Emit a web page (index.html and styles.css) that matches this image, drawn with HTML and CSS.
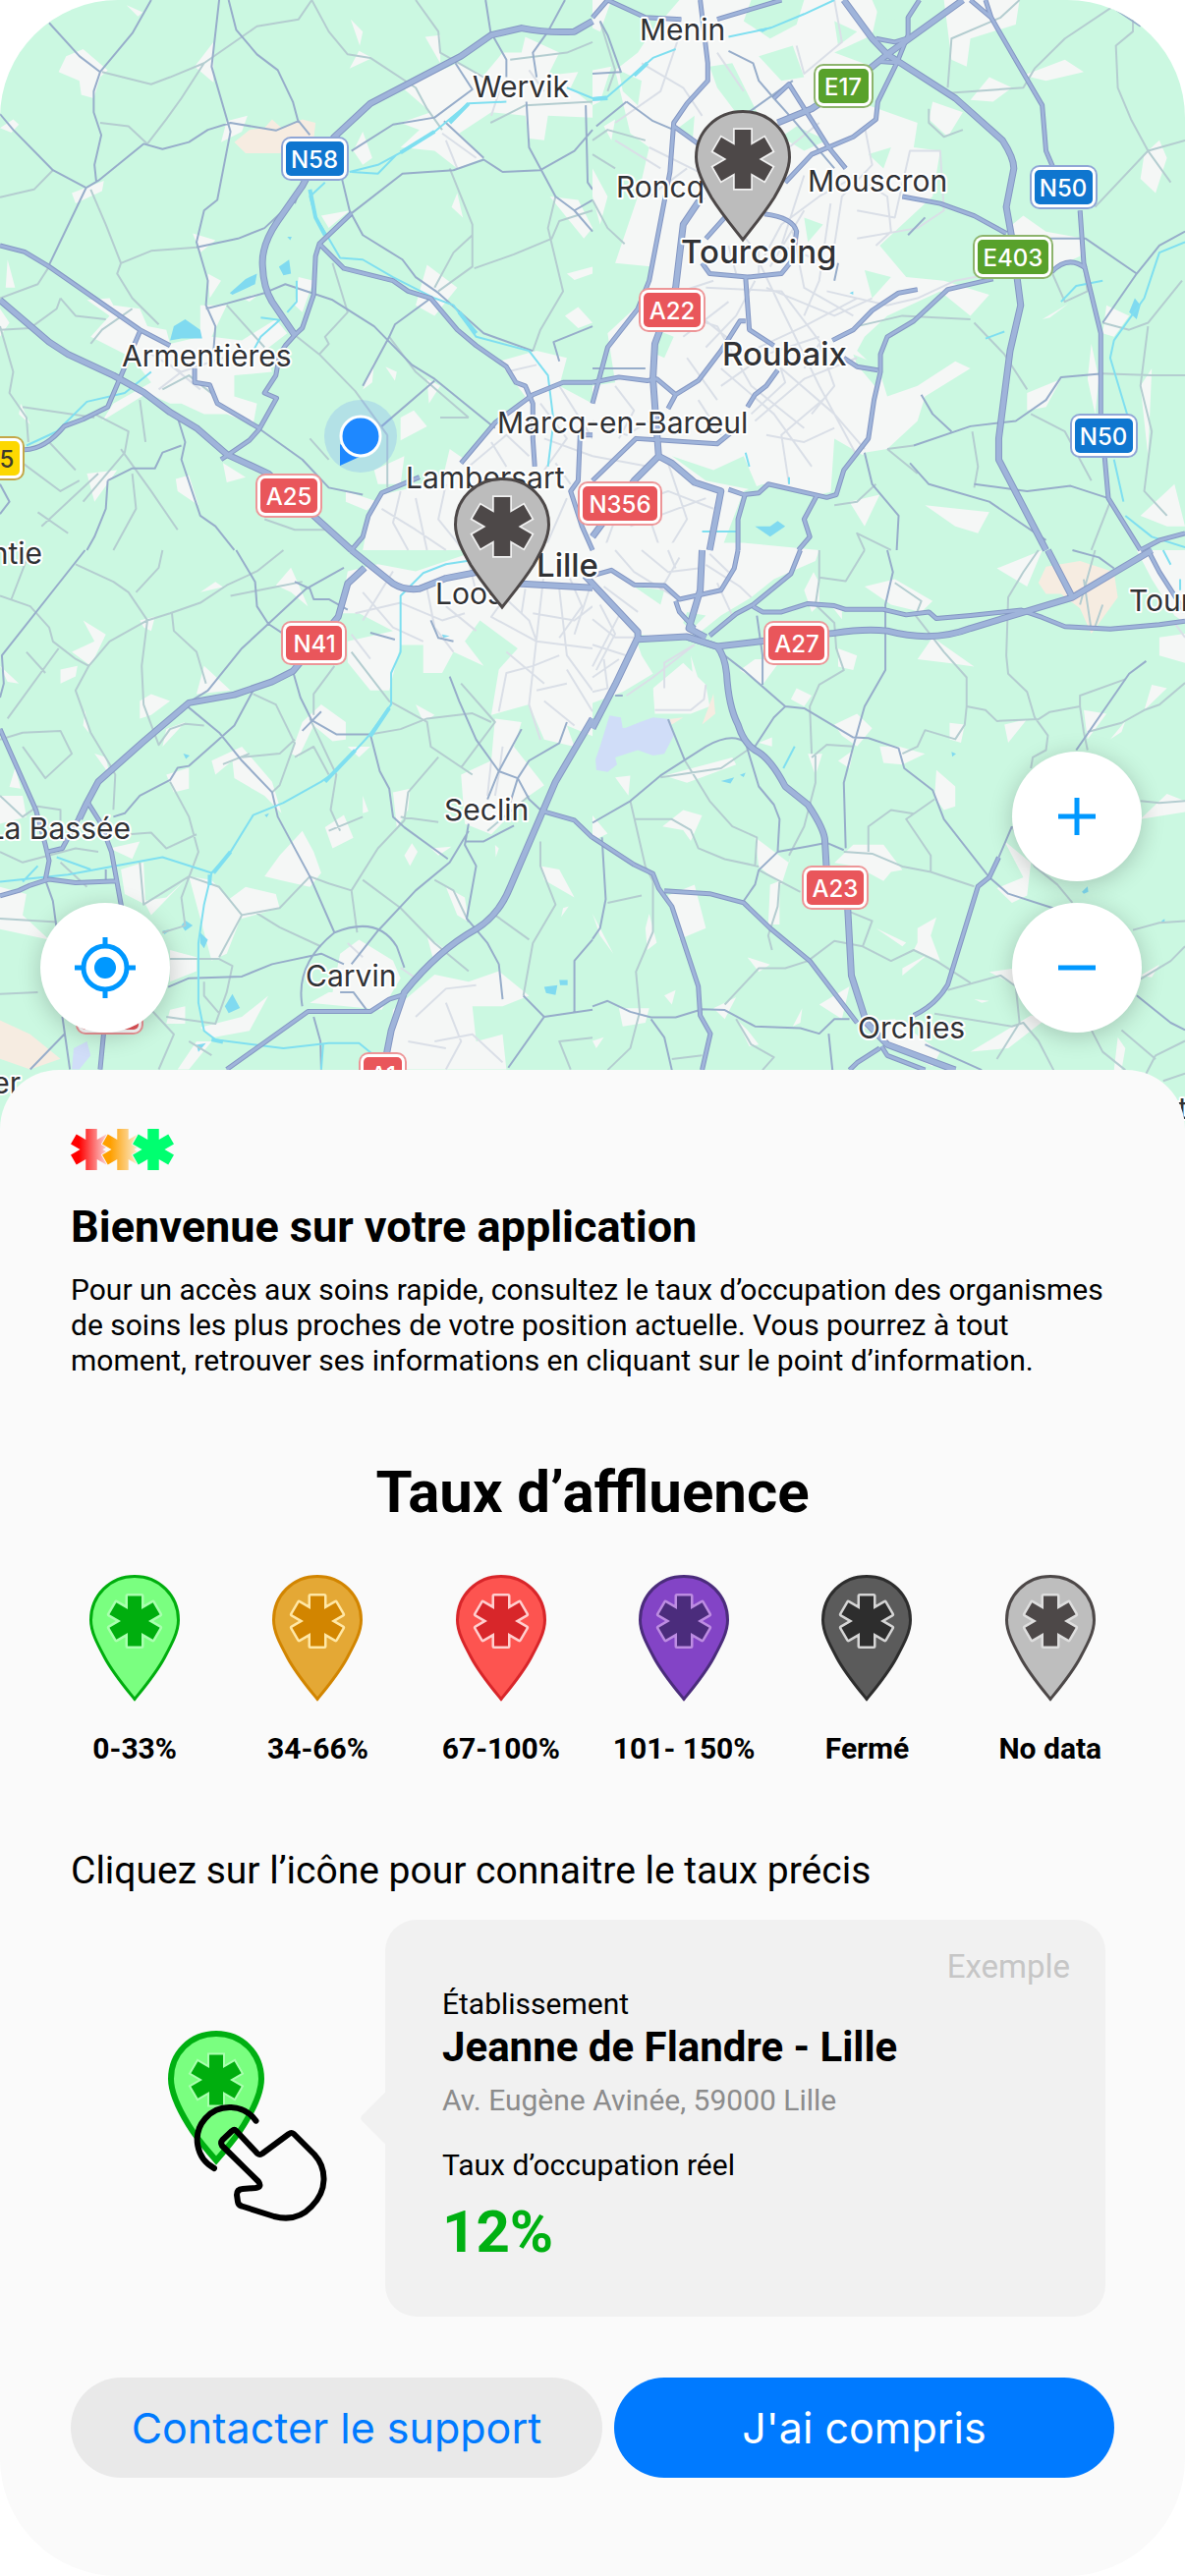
FILE: index.html
```html
<!DOCTYPE html>
<html lang="fr">
<head>
<meta charset="utf-8">
<meta name="viewport" content="width=device-width, initial-scale=1">
<title>Taux d’affluence</title>
<link rel="stylesheet" href="styles.css">
</head>
<body>
<svg class="defs" aria-hidden="true">
  <defs>
    <polygon id="star" points="-7,-25.500 7,-25.500 7,-12.100 18.600,-18.800 25.600,-6.700 14,0 25.600,6.700 18.600,18.800 7,12.100 7,25.500 -7,25.500 -7,12.100 -18.600,18.800 -25.600,6.700 -14,0 -25.600,-6.700 -18.600,-18.800 -7,-12.100"/>
    <symbol id="pin" viewBox="0 0 92 129">
      <path class="pin-body" d="M46 1.500C21 1.500 1.500 21 1.500 46C1.500 58 8 70 15.500 84C24 100 35 113 46 126.500C57 113 68 100 76.500 84C84 70 90.500 58 90.500 46C90.500 21 71 1.500 46 1.500Z"/>
      <use class="pin-star" href="#star" x="46" y="47"/>
    </symbol>
  </defs>
</svg>
<main class="app">
  <section class="map-area" aria-label="Carte">
    <svg class="map" viewBox="0 0 1206 1149" role="img" aria-label="Carte de la métropole lilloise">
      <defs>
        <g id="motorways">
          <g transform="scale(.3846 .3571)">
            <path d="M1568 60L1520 90Q1450 95 1380 80L1300 100L1220 160L980 295L885 390L840 450L800 530L735 630Q690 700 695 760Q697 820 720 860L780 955"/>
            <path d="M0 855L130 975L180 1010L300 1070L380 1118L450 1175L520 1220L600 1295L710 1350L840 1480L930 1568"/>
          </g>
          <g transform="translate(603) scale(.3846 .3571)">
            <path d="M665 0L740 110L780 155L960 280L1085 400Q1115 450 1115 480L1095 590L1110 680L1133 870L1105 1000L1075 1250V1310L1200 1568"/>
            <path d="M980 0L780 155L700 225L580 310L490 350"/>
            <path d="M290 560L240 640L220 820L165 980L160 1080L175 1300L110 1370L0 1530"/>
            <path d="M175 1300L210 1320L270 1375L340 1400L310 1568"/>
          </g>
          <g transform="translate(0 560) scale(.3846 .3571)">
            <path d="M1568 480L1470 660L1430 760L1350 960Q1320 1040 1260 1080Q1160 1140 1070 1260L1035 1370L1015 1480"/>
            <path d="M930 0L1040 95Q1070 115 1110 110L1180 80L1300 55M1370 95L1568 107"/>
            <path d="M965 50L920 95L895 190L775 345L720 375L620 412L500 435L380 545L260 660L230 720L210 765"/>
          </g>
          <g transform="translate(603 560) scale(.3846 .37)">
            <path d="M-20 70L120 225V240L60 370L0 490M120 245L250 238L330 265L450 250L640 228Q720 215 780 222Q900 255 1000 215L1270 130L1480 0M1270 130L1205 0"/>
            <path d="M250 238L330 265Q350 290 355 340Q360 430 385 480Q400 530 430 550Q470 570 510 650L570 700Q615 770 615 800L620 890L675 980L685 1170L725 1300L780 1360L960 1430"/>
            <path d="M290 0L285 110L255 215L300 240"/>
          </g>
        </g>
        <g id="trunks">
          <g transform="scale(.3846 .3571)">
            <path d="M0 700L65 718L130 760L370 940L450 985M780 955L755 985L740 1010L730 1070L700 1120L732 1135L685 1225L660 1255L585 1310M780 955L800 935L830 840L835 730L845 695L930 608"/>
            <path d="M845 695L910 765L1040 800L1080 830L1140 850L1210 940L1260 985L1340 1045L1365 1090L1390 1100L1410 1150V1250L1415 1330M65 1282Q120 1280 170 1215L220 1195L285 1160L370 945M515 1050V1090L555 1097L575 1150L685 1220"/>
            <path d="M1568 1090H1490L1410 1125L1310 1205L1220 1320M930 1568L960 1530L975 1470L1010 1405L1110 1360M1568 1240H1535L1530 1370L1510 1400L1540 1500L1568 1568"/>
          </g>
          <g transform="translate(603) scale(.3846 .3571)">
            <path d="M0 50L40 0L140 50L235 55M285 0L305 180V230L250 295L215 350L205 490L150 800L120 880L40 990L0 1150M865 0L835 50V100L805 180L755 290L750 340L690 390L580 440L510 520M500 0L330 55"/>
            <path d="M480 280L520 240L625 420L670 480M820 560L920 580L1010 615L1095 665M1040 0L1055 50L1130 190L1190 300L1200 430L1220 480M1290 600L1300 750L1345 950V1180L1365 1420L1450 1568M1000 0L1055 50M750 110L800 120L830 110M760 175L820 180"/>
            <path d="M215 360L280 410M455 610Q530 620 540 660L530 740L500 780L410 790L310 780L290 750M350 620L300 680M405 790L415 940L480 985M405 915H390L340 1000L280 1085L220 1125L200 1165M0 1090L70 1075L145 1085L170 1080L220 1125"/>
            <path d="M1060 795L940 825L850 915L780 960L762 1010V1060L745 1140L730 1250L665 1340L645 1410L620 1418L465 1380L440 1405L400 1410L360 1395M860 825L810 835L740 885L690 940L635 970M755 1055L700 1045L665 1020M490 1055L460 1100L430 1125L410 1160"/>
            <path d="M0 1370L115 1250L330 1265L370 1230M405 1405L385 1480V1568M595 1410L560 1480L575 1530L545 1568M1215 775Q1260 725 1305 765M1568 1520L1500 1540L1450 1568"/>
          </g>
          <g transform="translate(0 560) scale(.3846 .3571)">
            <path d="M0 510L95 740L120 840L130 885L120 940M230 715L265 775L295 860L322 1020M0 985L50 970L80 955L130 938L200 948L310 943M125 860L165 850L210 760M275 1370L265 1480M600 1480L815 1315H980L1030 1280L1075 1265M1440 745L1520 770L1568 820"/>
          </g>
          <g transform="translate(603 560) scale(.3846 .37)">
            <path d="M0 70L50 55L110 95L190 97L230 135L340 110L375 50L385 0M550 0L525 65L425 150L380 175L310 235M220 140L230 170L270 215M425 155L450 170H500L570 147L640 153L670 163H770L830 178L890 170L910 188L1000 180L1135 165L1190 185L1250 210L1370 217L1500 205L1568 195"/>
            <path d="M0 790L110 865L160 890L175 930L210 980L280 1200L285 1280L312 1330L290 1430M190 937L310 945L400 970L470 1040L575 1130L700 1300M680 1430L700 1410L760 1370M1075 845L1050 900L1020 925L940 1195Q910 1250 850 1280M1470 0L1500 60L1568 170M765 1365L780 1390L880 1430"/>
          </g>
        </g>
      </defs>
      <rect class="land" width="1206" height="1149"/>

      <g transform="scale(.3846 .3571)">
        <path class="urban" d="M155 205L175 160L220 140L285 200L265 220L248 280L215 270L210 230ZM515 190L565 120V235ZM928 55L960 90L952 130ZM950 145L985 165L925 195ZM1125 105L1165 100V180ZM335 15L378 35L365 47ZM0 365L35 340L50 355L30 378ZM600 345L655 330L640 375L585 405ZM190 550L275 515L270 545L200 580Z
          M1065 250L1210 180L1280 215L1330 150L1380 150L1390 105L1480 150L1450 215L1530 205L1510 250L1568 300V335L1450 330L1440 400L1400 395L1390 330L1300 320L1215 380L1280 450L1210 480L1150 430L1060 420L1110 370L1060 350L1140 320ZM960 375L985 450L960 470L935 430ZM1210 550L1225 620L1195 590ZM510 665L570 685L530 720ZM850 615L925 600L870 650ZM1130 755L1210 820L1150 900L1100 870ZM790 790L830 800L800 890L780 870ZM550 780L585 800L555 850ZM640 850L690 835L660 860Z
          M230 855L290 850L300 870L370 880L390 930L440 940L450 980L530 960L530 870L600 870L560 960L640 970L730 910L760 950L700 1000L720 1060L620 1070V1130L680 1150L670 1210L600 1180L540 1180L480 1150L450 1150L390 1120L270 1200L300 1150L400 1090L350 1020L240 960L290 900ZM20 740L40 820L15 820ZM1495 900L1530 875L1568 920L1530 935ZM1455 560L1530 570L1568 650L1545 680L1500 620Z
          M1320 1030L1420 1000L1500 1020L1480 1100L1568 1150V1568H960L975 1480L1010 1410L1170 1370L1190 1280L1230 1310L1320 1200L1390 1130ZM915 1400L1000 1430L970 1455L915 1430ZM1130 1080L1165 1100L1135 1150ZM1060 1190L1095 1170L1130 1215L1060 1255ZM990 1340L1070 1300L1060 1380L1000 1380ZM230 1350L310 1340L250 1430ZM465 1365L500 1355L525 1440L470 1400ZM590 1320L650 1360L600 1375ZM1500 780L1568 760V780L1520 798ZM990 1030L985 1090L960 1110ZM1020 1045L1050 1060L1045 1085ZM55 1150L80 1210L50 1180ZM0 880L25 920L0 960Z"/>
        <path class="peach" d="M620 405L660 370L700 365L720 340L745 365L800 340L835 350L830 400L740 437H650Z"/>
        <path class="water" d="M450 970L460 930L490 910L530 940L535 965L480 965ZM608 835L650 795L680 780L675 810L615 840ZM738 760L765 740L770 780L750 785ZM760 675L772 675L768 685Z"/>
        <path class="street" d="M1100 1420L1130 1568M1010 1450L1100 1510L1180 1568M1060 1400L1040 1490L1080 1568M1430 1150L1500 1250L1440 1340M1480 1100L1568 1250M1440 1250L1568 1300M1240 1330L1340 1240L1400 1300M1500 1420L1440 1568M1180 1380L1160 1480L1220 1560M1300 1260L1340 1330M1470 1320L1510 1380M400 1010L480 1060L590 1020M420 1110L480 1060M450 1040L530 1110M1400 200L1440 260M1330 230L1300 330M1170 380L1260 450M1210 480L1180 400M1340 1060L1420 1040"/>
        <path class="minor" d="M270 205L400 240L450 220L540 180L680 75L790 55L825 0L870 90L920 155L980 165L1100 250L1130 310L1170 370M540 180L480 280L440 340L390 410M265 350L340 360L390 410M140 485L90 540L0 562M240 540L280 640L320 750L310 780L350 850L420 925M320 750L400 715L520 705M130 760L100 810L0 850M1190 480L1250 640V760L1160 830M1250 670L1200 720L1150 820M880 750L920 890L860 960L870 980L845 1010M780 955L845 1010L940 1115L1025 1240M1568 600L1480 630L1460 680L1360 725L1255 765M1470 560L1450 650L1490 830L1430 940L1410 1000M160 850L200 900L280 910M240 980L270 940L350 880M0 930L35 1060L25 1120L70 1190L75 1260M0 940L80 935L150 880L160 850M250 1180L340 1230L330 1290L220 1430M110 1500L260 1350M320 1280L400 1400L470 1510M60 1320L160 1400L210 1370M1025 1240V1390M820 1250L870 1310M350 1350L360 1450L300 1568M100 1460L180 1520M700 1480L780 1510L860 1510M1298 350L1390 300L1568 290M1568 120L1500 150L1350 170M1100 0L1160 90L1165 150L1280 220M1030 960L1100 1060L1240 1190M1165 1190H1240M600 870L700 990M430 1110L500 1070L570 1130M60 1160L250 1190M130 1260L200 1340M370 1140L385 1260"/>
        <path class="secondary" d="M130 65L210 160L265 205L350 95L400 0M265 205L248 260V320L268 385L250 470L255 520M0 325L35 370L140 485L228 535L130 755M228 535L260 515L300 480L380 410L430 425L500 405L550 370L610 350L730 372L790 345L820 385M580 0L560 190L610 375L575 570L540 600L520 690L550 800L545 870L570 930L565 1000M605 0L625 85L680 155L735 200L775 290L790 350M520 705L630 680L700 650L750 600M545 880L600 865L700 835L755 810L880 855L990 930L1090 1040L1150 1080L1310 1220M1285 0L1298 90L1340 170V220M1495 0L1450 90L1410 150L1420 220M930 430L1040 355L1150 335L1250 255L1205 180M905 510L925 600L960 670L1065 740L1100 790L1160 835L1280 950L1410 1000M930 608L1065 495L1200 485L1280 455L1330 490L1430 485L1520 430L1568 370M1280 450L1175 345M1393 290L1400 420L1470 560L1520 600L1568 660M1140 850L1045 925L1030 960L960 1100M1010 1215L1150 1085M690 1225L800 1310L870 1390L960 1410M470 1190L490 1260L480 1310L530 1470L570 1500L620 1568M0 1380L25 1430L0 1465M285 1370L350 1335H410L430 1290L480 1270M285 1370L280 1450L250 1530L230 1568M1568 930L1465 975L1480 1030M1550 300L1555 520L1568 540M1520 600L1568 570M800 520L780 580M860 510L910 410"/>
        <path class="river" d="M925 490L1000 470L1060 435L1150 375L1240 295L1340 290M930 490L1000 495L1050 440M1500 250L1568 280M860 520L820 560L835 620L870 680L900 735L960 740L1040 790L1150 850L1200 870L1260 960L1400 1000L1450 1070L1465 1200L1450 1330M785 800V860L760 890M690 905L740 912L690 960L670 1000M400 1060L330 1120L230 1145L150 1230L70 1270"/>
        <path class="river wide" d="M1060 435L1150 375M1190 350L1240 295M820 540L835 620L860 670M1215 890L1260 950"/>
      </g>

      <g transform="translate(603) scale(.3846 .3571)">
        <path class="urban" d="M60 200L120 150L150 100L230 0H760L740 100L640 150L740 190L730 300L860 350L850 420L920 430L900 560L820 640L760 700L830 790L930 800L1050 840L1000 900L920 830L780 900L720 960L700 1000L760 1060L780 1130L860 1100L960 1030L1000 1050L880 1130L860 1200L780 1280L720 1290L640 1400L600 1410L560 1400L450 1380L400 1400L340 1568H0V1100L60 1090L40 950L120 870L160 760L60 750L120 560L150 420L100 380Z
          M930 0H1130L1120 70L1000 110L990 190L950 170ZM1050 220L1110 250L1060 290L1000 285ZM1140 215L1250 170L1300 205L1200 230ZM1460 440L1500 400L1520 450L1490 550L1450 510ZM1140 615L1200 660L1300 680L1290 730L1210 770L1100 650ZM1360 870L1420 900L1380 960L1350 950ZM1190 910L1260 865L1210 905ZM1320 980L1340 1080L1330 1180L1310 1080ZM1150 1120L1240 1080L1200 1160L1150 1170ZM1450 1100L1480 1050L1470 1300ZM1450 1470L1540 1380L1568 1500L1520 1500ZM880 1440L1050 1460L1020 1520L960 1500ZM680 1430L760 1410L720 1500ZM900 290L980 320L940 390L890 340ZM0 0H50L20 90L0 80ZM0 200L50 190L20 290L0 300ZM30 360L60 340L50 400ZM1400 0H1440L1400 30ZM0 480L40 560L20 640L0 560Z"/>
        <path class="land" d="M310 190L370 180L440 330L400 350L330 250ZM420 0H560L540 70L470 110L400 60ZM440 160L530 130L560 220L500 230ZM740 0H900L830 60L760 50ZM640 60L700 90L650 130ZM720 770L790 790L740 850ZM170 940L215 960L190 1020L170 1010ZM690 1010L760 1040L755 1110L700 1040ZM640 1250L720 1300L630 1410ZM210 1300L320 1340L400 1300L440 1400L300 1370ZM560 620L610 640L570 690ZM70 200L130 230L120 300L80 260ZM540 360L620 400L560 430L500 390ZM730 440L790 420L770 480ZM220 370L270 330L265 400Z"/>
        <path class="water" d="M1420 890L1435 850L1450 870L1440 910ZM430 1500L470 1500L490 1485L510 1500L470 1530ZM435 85L480 75L450 92ZM680 835L690 830L690 840Z"/>
        <path class="street" d="M320 560L420 700L500 880L600 1100L700 1300M150 420L300 500L420 460M560 500L500 700L640 760M420 1000L560 930L700 850M430 800L380 900L300 990M460 820L640 900L740 850M300 820L500 830L620 1000M240 900L330 930L420 1100L560 1220M180 850L320 800M340 1100L460 1010L600 960M500 1050L640 1180L720 1280M430 1200L560 1080L700 1020M280 1140L340 1240M340 1050L480 1180L580 1330M520 1380L500 1240L620 1130M250 1020L330 1140M0 1300L150 1330M0 1200L90 1240L150 1200M30 1568L70 1450L200 1400L320 1450M200 1320L250 1480L200 1568M120 1380L180 1568M300 1420L100 1500M560 600L470 760M630 580L600 800L560 900M700 500L600 560L500 640L440 760M720 360L740 470L660 560L640 700M700 600L800 620L840 430H920L930 600L860 650L700 680M600 350L520 420M130 180L240 250L290 330M230 100L180 260L60 350M60 400L180 480M330 150L400 260M540 130L560 210L660 120L640 0M150 560L250 480M440 500L400 620M530 660L560 820L690 900M440 700L440 780M360 700L380 780M750 700L790 660L780 560L720 520M620 830L780 870L860 850L960 800L1060 780M560 1050L600 980L640 1100L580 1180M260 880L400 1000M240 960L360 860M60 1100L110 1170L70 1250M480 990L510 1090L420 1180M460 1240L560 1260L640 1220"/>
        <path class="minor" d="M940 250L950 110L1080 50L1130 0M940 265L1140 250L1170 195L1250 110L1375 20M1430 0L1430 90L1385 130L1390 250L1425 340L1470 430L1568 400M1470 430L1330 590M1470 430L1530 520M1215 775L1250 860L1310 830L1300 760M1350 920L1420 940L1470 920L1560 800M1010 920L1090 1010L1150 1110M1350 1065L1480 1070H1568M1470 930L1450 1100L1480 1230L1460 1400L1520 1470M890 310V350L930 390L980 370M1005 1230L1020 1330L1010 1390M1160 1180L1250 1230L1320 1370M780 1280L860 1350M640 1440L700 1430L750 1380M1370 1430L1320 1568M0 440L60 480M0 570L40 650L85 695M0 400L40 370L140 400M720 1568L700 1520L790 1568M20 60L60 200L40 260M780 1280L850 1270M700 930L820 900L1000 910"/>
        <path class="secondary" d="M360 145L425 180L440 230L480 280L530 340L640 480M1375 20L1450 75M1210 680L1305 680L1440 780L1350 920M1440 780L1500 700L1568 660M835 670L880 620M1350 1065L1240 1075L1200 1140L1120 1200L1000 1215L850 1270M870 1125L900 1180L950 1230M840 1320L890 1380L1050 1430L1200 1540M1010 1380L1150 1400L1265 1385L1365 1420M720 1290L740 1380L810 1470L805 1568M530 230L400 330M90 290L10 360M90 290L160 345L215 370M0 210L75 205L40 100L20 60M0 1050L140 1050M640 800L650 750"/>
        <path class="river" d="M0 280L40 275L100 220L160 165L220 140M360 105L470 80L560 40L640 0M1568 690L1500 720L1460 850L1380 970L1370 1020L1420 1200M1240 860L1280 815L1350 800M1380 1310L1405 1430M1530 150L1568 210M1410 1470L1480 1530L1568 1560M405 1290L415 1330M1040 965L1090 945M520 1360V1380M290 1515H380"/>
        <path class="river wide" d="M0 283L40 280M110 215L145 180"/>
      </g>

      <g transform="translate(0 560) scale(.3846 .3571)">
        <path class="urban" d="M920 60L1000 40L1100 60L1240 10V-20H1568V530L1500 500L1520 560L1440 540L1400 440L1300 470L1320 340L1370 280L1270 200L1230 260L1280 330L1200 290L1170 350H1120V270H1060L1030 400H980L920 320V260L1040 230L950 180H900Z
          M770 50L795 110L815 160L770 120L730 100ZM530 120L570 90L590 105ZM220 200L280 240L240 330L190 290L250 260ZM160 340L205 330L200 360L160 380ZM370 200L410 190L400 230L380 220ZM540 330L610 400L520 410ZM370 430L400 410L450 430L400 470L370 480ZM440 510L490 490L430 560ZM225 455L235 520L220 500ZM250 580L280 590L290 640ZM0 330L50 380L20 375ZM800 490L850 440L915 490V540L880 545L830 500L790 590L770 580ZM560 600L640 560L720 660L745 750L700 700L620 650L615 600L570 640ZM440 640L500 620V680L460 690ZM860 790L910 755L935 820L880 850ZM1040 690L1085 680L1080 740L1050 790ZM740 870L800 800L830 860L850 920L820 960L740 940L700 930ZM1100 440L1150 470L1120 490ZM1220 640L1300 600L1310 480L1380 490L1360 560L1440 670L1400 700L1300 810L1230 780ZM600 1000L650 960L730 980L740 1020L640 1050ZM500 930L560 940L640 1040L600 1150L560 1170ZM290 850L370 830L350 880ZM0 960L70 980L60 1040L130 1110L0 1080ZM380 1000L440 990L490 940L400 1040ZM320 910L380 890L385 1010L330 980Z
          M880 1260L900 1150L950 1110L1040 1170L1060 1220L1010 1310L820 1290L870 1260ZM1040 1310L1150 1210L1240 1230L1320 1200L1400 1270L1330 1300H1250L1260 1400L1330 1380L1340 1480H1030ZM1180 960L1230 990L1240 1060L1210 1040ZM1430 900L1480 910L1520 990L1440 940ZM450 1310L490 1300V1350L440 1350ZM530 1360L640 1330L710 1270L660 1370L560 1390ZM470 1480L520 1400L560 1400L500 1480ZM1070 870L1090 835L1105 860L1085 900ZM1140 850L1195 845L1160 870ZM1130 1100L1180 1140L1150 1180ZM1490 1020L1505 1015L1485 1045ZM1310 840L1320 850L1312 875ZM960 700L975 745L960 750ZM40 620L55 680L25 675ZM920 560L980 560L950 590ZM450 1140L520 1160V1200L450 1230ZM0 700L60 700L70 760L0 780Z"/>
        <path class="peach" d="M0 1340L80 1380L160 1450L80 1480L0 1450Z"/>
        <path class="lake" d="M190 1480L195 1420L230 1400L240 1440L210 1480Z"/>
        <path class="water" d="M595 1300L615 1265L635 1305L605 1320ZM1440 1245L1475 1240L1470 1268L1445 1262ZM1480 1225H1502V1240H1482ZM480 1070L490 1055L510 1070L490 1085ZM530 1090L550 1110L540 1135L530 1120ZM520 1410L545 1405L525 1430ZM430 1085L455 1080L435 1095ZM485 580L502 585L492 595ZM1170 240L1190 245L1172 250ZM700 755L712 750L706 762Z"/>
        <path class="street" d="M940 180L1060 150L1170 200L1230 180M960 120L1040 220L1120 260M1040 60L960 200M1130 110L1150 220L1200 290M1180 160L1260 230M1360 100L1300 190L1420 260L1568 280M1440 60L1420 250L1400 440L1430 540M1480 110L1500 300L1568 400M1340 140L1400 200L1420 260M1320 460L1340 350L1410 330L1480 300M1340 290L1440 380M1410 180L1520 200L1568 160M1240 30L1260 120M1500 60L1540 160L1480 250M930 240L980 310M1300 600L1290 700M1330 560L1320 640L1310 700M1500 340L1568 460M1420 400L1500 380M1440 430L1520 500M1100 1330L1180 1250L1260 1240M1150 1400L1250 1380L1330 1460M1180 1290L1220 1400L1180 1480M1080 1400L1180 1420M920 1120L960 1160M1060 1190L1100 1220M1390 110L1380 180M1560 110L1520 240"/>
        <path class="minor" d="M0 130L80 160L130 220L140 260L200 310L235 330L290 260L390 200L450 180L530 150L600 100L680 60L750 0M430 0L420 50L360 120M200 40L300 90L340 120L390 200L375 330L380 440L420 555L450 510L490 495L540 500M455 180L460 230L520 290L545 380M155 280L20 480M80 0L30 140M235 330L200 400L240 520L290 610L305 640L300 740M0 540L60 520L160 515L190 580L120 650L60 560M670 410L730 440L780 550L740 670L720 690M780 540L740 580L640 590M885 330L830 410V470M930 290L1030 430L1130 490L1140 560L1250 640M980 525L1060 510L1130 480L1250 465L1300 490M1160 590L1080 690L1070 770L1000 850L930 970L945 1090M450 660L500 760L525 860L480 990L490 1070L430 1090M340 810L400 805L440 850L520 810M820 480L890 640L875 740L900 800M820 930L740 1020L640 1040L580 1160M500 930L580 960L640 1040M930 970L870 950L820 930M960 940L1060 1020L1150 1120L1240 1200M680 1035L740 1075L850 1130M450 1165H580L615 1185L600 1260L570 1350L440 1330M540 1230V1270L580 1320M1430 830V900L1470 1010L1410 1120L1385 1270M1310 1040L1400 1110M1060 760L1160 775M400 1310L460 1380L420 1480M0 1265L100 1260M960 760L870 800M370 890L380 1010L500 930M0 1050L150 1060M0 860L60 890L200 850L260 860M0 700L60 760L100 730L160 740V780M160 890L230 960M1400 700L1290 800M1220 380L1310 490L1220 620M1150 940L1200 970L1240 1060M1510 1480L1480 1400L1568 1390M500 1400L560 1440M70 290L120 350M610 130L800 90M870 640L830 560L780 590M590 610L660 580"/>
        <path class="secondary" d="M225 0L5 300L10 380L0 420M625 0L675 90L680 160L710 210L745 235M910 50L810 110L710 210L640 280L550 400L490 440L580 520L640 600L720 690L735 760L770 830L820 930L885 1090M775 345L795 420L825 485L890 525H980L1005 630L1030 680L1040 760L1070 790L1185 880M670 400L620 500L500 615L470 620L450 655L370 700L330 750L300 760M800 515L850 460M1140 200L1160 250L1200 260M1190 360L1215 430L1260 540L1320 630L1370 650L1400 710L1430 740M1500 490L1480 550L1400 600L1370 650L1350 720M1380 510L1320 630L1290 710M1240 800L1190 890L1100 970L1000 1085L930 1180M1240 780L1230 840L1260 900L1235 1050L1290 1120L1320 1180L1330 1280M1230 830H1280L1360 785M800 1300Q780 1180 885 1090Q1000 1040 1050 1130L1070 1190M445 1245L500 1220L640 1215L720 1180L850 1150L910 1180M780 90L820 110L830 140H870L920 170M830 1330L848 1400L850 1480M120 940L140 1000L150 1080M165 1330L185 1480M1568 1110L1520 1170V1320M1385 1270L1440 1330L1345 1475M1440 1330L1568 1310M170 1380L80 1480M900 1260H935L970 1310M980 235L1045 255M280 910V940"/>
        <path class="river" d="M1240 30L1180 40L1120 65L1060 130V290L1035 350V440L975 530L890 630L850 660L750 720L670 755L610 860L560 920L540 1010L525 1120V1290L540 1370L570 1395L750 1420L870 1405H950L990 1440M0 945L180 925L430 875L560 920M855 1410L850 1480M150 875L240 910M100 900L60 945"/>
        <path class="river wide" d="M1030 450L980 530M940 570L860 660M610 860L565 920M555 925V955M560 1395L590 1402"/>
      </g>

      <g transform="translate(603 560) scale(.3846 .37)">
        <path class="urban" d="M0 -20H250L430 50L420 130L340 180L280 230L180 240L110 230L130 290L160 340L80 390L0 420ZM160 380L240 310L300 370L310 430L260 450H165ZM250 0V-20H400L600 0L590 30L480 80L420 130ZM585 60L600 90V150L580 170L560 110ZM720 100L760 90L800 80L900 140L870 170L790 150ZM630 150L660 160V190ZM650 270L700 290L690 330L650 320ZM860 300L900 240L1010 320L940 310ZM540 380L580 400L560 430L525 410ZM640 480L700 450L740 490L700 540L660 510ZM760 540H810L880 560L820 590L770 585ZM945 475L985 480L975 530L945 520ZM1090 480L1150 465L1100 530ZM1440 0H1568V200L1540 180L1480 80ZM1500 240L1568 230V310L1500 290ZM1070 50L1190 0L1150 100ZM190 620L370 570L380 590L250 640ZM60 625L100 620L95 675ZM185 760L240 715L290 730L260 800L240 770ZM910 605L960 650V705L930 715L905 680ZM430 790L520 860L525 840L500 920L440 870ZM640 860L690 810H770L820 880L790 885L770 910L700 870ZM200 950L270 920L300 1040L230 1070ZM150 1000L170 1080L145 1100L140 1040ZM860 1080V1040L910 1010L895 1060L920 1130L850 1100ZM750 1040L830 1080L820 1090ZM70 1260L150 1260L140 1300L80 1310ZM320 1260L380 1230L350 1290ZM600 1250L680 1200L660 1290ZM700 1300L800 1290L920 1380L900 1420L820 1380ZM1000 1380L1160 1280L1200 1290L1100 1370ZM1050 1160L1120 1150L1140 1210ZM1450 740L1520 670L1568 690V720ZM1300 440L1360 450L1310 520ZM1090 800L1160 860L1150 950L1110 970L1070 930L1140 900ZM1380 1430L1390 1340L1410 1370L1400 1430ZM1450 1170L1500 1140L1480 1175ZM390 330L430 300H500L450 370ZM260 290L285 370L265 340ZM570 560H608L590 620ZM650 580L690 550L680 600ZM1370 520L1410 470L1400 500ZM1460 440L1480 370L1520 380ZM410 1120L470 1140L440 1160ZM190 1225L220 1210L210 1250ZM0 1350L30 1340L10 1370ZM530 1310L555 1260L550 1300ZM380 1290L410 1320L440 1360L415 1365ZM470 920L495 910V1030L465 1030ZM1010 1235L1050 1240L1030 1245ZM440 530L475 515V540ZM820 1150L890 1110L820 1170ZM0 730L40 780L0 800ZM0 1000L55 1110L20 1060Z"/>
        <path class="peach" d="M1180 90L1200 45L1290 30L1380 60L1390 130L1320 230L1290 160L1240 120H1200ZM290 480L320 395L325 450ZM200 465L240 460L210 480Z"/>
        <path class="lake" d="M20 540L45 455L75 460L80 490L160 460L205 465L215 510L190 560L160 565L120 550L60 570L65 590L40 610L10 605L8 575Z"/>
        <path class="land" d="M80 410L160 375V440L120 475L85 490L75 440ZM250 170L300 180L260 220L240 200ZM110 100L190 110L180 150Z"/>
        <path class="water" d="M340 635L375 625L365 642ZM390 618L405 612L400 624ZM1295 940L1310 925L1312 940L1300 945ZM950 555L962 560L952 568ZM1505 1020L1514 1014V1026Z"/>
        <path class="street" d="M0 190L60 240L110 240M0 260L90 290M20 150L60 230L10 330M0 350L70 300M30 100L120 170M60 0L110 60L220 130M130 0L200 60L280 50M200 0L220 50M230 20L180 110M300 40L390 100L420 130M310 10L360 60M90 400L160 350L270 260M190 380V310L270 260M300 370L295 410L260 440H165M330 90L370 180M0 390L40 380L30 300M70 180L0 320M1540 200L1568 240"/>
        <path class="minor" d="M600 75L670 85L720 0M600 0L600 80L590 150L640 200L645 270L665 330L600 370L575 430L580 560M590 560L590 640L560 760L520 840M690 540L620 535L580 570M800 90L870 140L855 180L930 280L990 350V430L1040 440L1070 470L1180 465L1210 445L1290 430L1300 500L1310 550M990 430L985 480L960 520L880 495L860 540L820 560M1290 430V400L1410 355M1180 0L1140 60L1100 130L1095 290L1100 340L1150 390L1170 460L1205 510L1200 550L1165 570L1160 600M1310 500L1400 475L1460 440L1500 425L1568 365M245 580L310 690L370 760L435 790L430 870M180 625L340 600L410 550M100 690L140 870L160 910L160 1050L115 1160L125 1270L100 1370L40 1430M110 740L210 740L260 770L280 820L350 850L440 870M905 685L830 740L895 840V885M850 725L790 715L730 760V830M665 830L740 835L820 870L895 885L1010 925M440 880L550 940M495 910L490 980L465 1060L475 1100M670 990L740 1020L715 1090L640 1075L570 1130L510 1150L440 1150L350 1250M715 1090L790 1130L850 1100L910 1130L1000 1190M1110 760L1170 870L1230 920L1270 970M1430 1045L1500 1025L1568 1020M940 1210L1080 1170L1120 1200L1130 1300L1070 1400M1320 1320L1350 1380L1410 1430M1400 1320L1490 1400M905 1275L1110 1310L1140 1300L1180 1350L1220 1430M380 1290L420 1360L480 1395L450 1430M1300 80L1320 220M1450 690L1500 695L1568 690M1450 1180L1530 1130L1568 1090M40 970L130 950M210 1400L290 1390M1460 1450L1490 1390L1568 1350M1330 0L1290 150M1510 1460L1568 1440M1330 210L1350 150"/>
        <path class="secondary" d="M780 0L795 60L775 150V330L720 430L690 540L665 640L670 820M435 180L450 290V370M350 290L400 330L510 430L560 435L690 515L730 517L810 545L825 600L900 660L930 740L1050 900L1100 945L1220 985M510 430L480 460L430 540M0 750L100 690L180 620L300 540Q370 500 405 530L440 650L480 700L495 740L490 830L570 815L620 805L665 825M200 465L245 580M490 830L440 880L430 920L400 965M25 790L35 960L20 1040L0 1070M1280 550L1420 340L1465 305M1110 760L1075 845M0 1255L40 1240L100 1270L155 1285H220L290 1263L350 1265L430 1310L550 1315L600 1330L640 1290H680M155 1290L190 1340L210 1430M880 1360L1030 1430M1440 1225L1530 1300L1568 1320M625 1330L635 1430M1270 0L1340 20L1380 50M60 400H80"/>
        <path class="river" d="M1510 0L1530 40M535 540L505 600M1555 80V110"/>
      </g>

      <use href="#trunks" class="trunk-case"/>
      <use href="#motorways" class="motorway-case"/>
      <use href="#trunks" class="trunk-line"/>
      <use href="#motorways" class="motorway-line"/>

      <g class="places">
        <text x="651" y="41">Menin</text>
        <text x="481" y="99">Wervik</text>
        <text x="627" y="201">Roncq</text>
        <text x="822" y="195">Mouscron</text>
        <text x="124" y="373">Armentières</text>
        <text x="506" y="441">Marcq-en-Barœul</text>
        <text x="413" y="497">Lambersart</text>
        <text x="443" y="615">Loos</text>
        <text x="43" y="574" text-anchor="end">ntie</text>
        <text x="133" y="854" text-anchor="end">La Bassée</text>
        <text x="452" y="835">Seclin</text>
        <text x="311" y="1004">Carvin</text>
        <text x="873" y="1057">Orchies</text>
        <text x="1149" y="622">Tour</text>
        <text x="21" y="1113" text-anchor="end">er</text>
        <text x="1199" y="1139">t</text>
      </g>
      <g class="places city">
        <text x="693" y="268">Tourcoing</text>
        <text x="735" y="372">Roubaix</text>
        <text x="546" y="587">Lille</text>
      </g>

      <g class="shield blue">
        <g transform="translate(286 139)"><rect class="edge" width="69" height="45" rx="10"/><rect class="band" x="2" y="2" width="65" height="41" rx="8"/><rect class="face" x="5" y="5" width="59" height="35" rx="5"/><text x="34" y="32">N58</text></g>
        <g transform="translate(1048 168)"><rect class="edge" width="69" height="45" rx="10"/><rect class="band" x="2" y="2" width="65" height="41" rx="8"/><rect class="face" x="5" y="5" width="59" height="35" rx="5"/><text x="34" y="32">N50</text></g>
        <g transform="translate(1089 421)"><rect class="edge" width="69" height="45" rx="10"/><rect class="band" x="2" y="2" width="65" height="41" rx="8"/><rect class="face" x="5" y="5" width="59" height="35" rx="5"/><text x="34" y="32">N50</text></g>
      </g>
      <g class="shield green">
        <g transform="translate(828 65)"><rect class="edge" width="61" height="45" rx="10"/><rect class="band" x="2" y="2" width="57" height="41" rx="8"/><rect class="face" x="5" y="5" width="51" height="35" rx="5"/><text x="30" y="32">E17</text></g>
        <g transform="translate(990 239)"><rect class="edge" width="82" height="45" rx="10"/><rect class="band" x="2" y="2" width="78" height="41" rx="8"/><rect class="face" x="5" y="5" width="72" height="35" rx="5"/><text x="41" y="32">E403</text></g>
      </g>
      <g class="shield red">
        <g transform="translate(650 293)"><rect class="edge" width="68" height="45" rx="10"/><rect class="band" x="2" y="2" width="64" height="41" rx="8"/><rect class="face" x="5" y="5" width="58" height="35" rx="5"/><text x="34" y="32">A22</text></g>
        <g transform="translate(588 490)"><rect class="edge" width="86" height="45" rx="10"/><rect class="band" x="2" y="2" width="82" height="41" rx="8"/><rect class="face" x="5" y="5" width="76" height="35" rx="5"/><text x="43" y="32">N356</text></g>
        <g transform="translate(260 482)"><rect class="edge" width="68" height="45" rx="10"/><rect class="band" x="2" y="2" width="64" height="41" rx="8"/><rect class="face" x="5" y="5" width="58" height="35" rx="5"/><text x="34" y="32">A25</text></g>
        <g transform="translate(286 632)"><rect class="edge" width="67" height="45" rx="10"/><rect class="band" x="2" y="2" width="63" height="41" rx="8"/><rect class="face" x="5" y="5" width="57" height="35" rx="5"/><text x="34" y="32">N41</text></g>
        <g transform="translate(777 632)"><rect class="edge" width="67" height="45" rx="10"/><rect class="band" x="2" y="2" width="63" height="41" rx="8"/><rect class="face" x="5" y="5" width="57" height="35" rx="5"/><text x="34" y="32">A27</text></g>
        <g transform="translate(816 881)"><rect class="edge" width="68" height="45" rx="10"/><rect class="band" x="2" y="2" width="64" height="41" rx="8"/><rect class="face" x="5" y="5" width="58" height="35" rx="5"/><text x="34" y="32">A23</text></g>
        <g transform="translate(365 1071)"><rect class="edge" width="49" height="45" rx="10"/><rect class="band" x="2" y="2" width="45" height="41" rx="8"/><rect class="face" x="5" y="5" width="39" height="35" rx="5"/><text x="25" y="32">A1</text></g>
        <g transform="translate(77 1008)"><rect class="edge" width="69" height="45" rx="10"/><rect class="band" x="2" y="2" width="65" height="41" rx="8"/><rect class="face" x="5" y="5" width="59" height="35" rx="5"/></g>
      </g>
      <g class="shield yellow">
        <g transform="translate(-44 444)"><rect class="edge" width="69" height="45" rx="10"/><rect class="band" x="2" y="2" width="65" height="41" rx="8"/><rect class="face" x="5" y="5" width="59" height="35" rx="5"/><text x="51" y="32">5</text></g>
      </g>

      <g class="position">
        <circle class="range" cx="367" cy="444" r="37"/>
        <path d="M346 452V474L368 464Z"/>
        <circle class="dot" cx="367" cy="444" r="20"/>
      </g>

      <g class="marker" transform="translate(707 112)">
        <path d="M49 1.500C22 1.500 1.500 22 1.500 48C1.500 61 9 75 17 89C27 105 38 118 49 132C60 118 71 105 81 89C89 75 96.500 61 96.500 48C96.500 22 76 1.500 49 1.500Z"/>
        <use href="#star" transform="translate(49 50) scale(1.180)"/>
      </g>
      <g class="marker" transform="translate(462 486)">
        <path d="M49 1.500C22 1.500 1.500 22 1.500 48C1.500 61 9 75 17 89C27 105 38 118 49 132C60 118 71 105 81 89C89 75 96.500 61 96.500 48C96.500 22 76 1.500 49 1.500Z"/>
        <use href="#star" transform="translate(49 50) scale(1.180)"/>
      </g>
    </svg>

    <button class="round-btn locate" type="button" aria-label="Ma position">
      <svg width="62" height="62" viewBox="0 0 62 62" aria-hidden="true"><circle class="stroke" cx="31" cy="31" r="22"/><circle class="solid" cx="31" cy="31" r="11"/><path class="stroke" d="M31 0V9M31 53V62M0 31H9M53 31H62"/></svg>
    </button>
    <div class="zoom">
      <button class="round-btn" type="button" aria-label="Zoom avant">
        <svg width="38" height="38" viewBox="0 0 38 38" aria-hidden="true"><path class="stroke" d="M19 0V38M0 19H38"/></svg>
      </button>
      <button class="round-btn" type="button" aria-label="Zoom arrière">
        <svg width="38" height="38" viewBox="0 0 38 38" aria-hidden="true"><path class="stroke" d="M0 19H38"/></svg>
      </button>
    </div>
  </section>

  <section class="sheet">
    <svg class="logo" width="105" height="42" viewBox="0 0 105 42" role="img" aria-label="Logo">
      <defs>
        <linearGradient id="fade-red"><stop offset=".2" stop-color="#ff0000"/><stop offset="1" stop-color="#ff0000" stop-opacity="0"/></linearGradient>
        <linearGradient id="fade-orange"><stop offset=".2" stop-color="#ffa000"/><stop offset="1" stop-color="#ffa000" stop-opacity="0"/></linearGradient>
      </defs>
      <use href="#star" transform="translate(21 21) scale(.820)" fill="url(#fade-red)"/>
      <g class="logo-front">
        <use href="#star" transform="translate(53 21) scale(.820)" fill="#fafafa" opacity=".6"/>
        <use href="#star" transform="translate(53 21) scale(.820)" fill="url(#fade-orange)"/>
        <use href="#star" transform="translate(84 21) scale(.820)" fill="#00ff70"/>
      </g>
    </svg>
    <h1>Bienvenue sur votre application</h1>
    <p class="intro">Pour un accès aux soins rapide, consultez le taux d’occupation des organismes de soins les plus proches de votre position actuelle. Vous pourrez à tout moment, retrouver ses informations en cliquant sur le point d’information.</p>

    <h2>Taux d’affluence</h2>
    <ul class="legend">
      <li class="low"><svg width="92" height="129" aria-hidden="true"><use href="#pin"/></svg>0-33%</li>
      <li class="medium"><svg width="92" height="129" aria-hidden="true"><use href="#pin"/></svg>34-66%</li>
      <li class="high"><svg width="92" height="129" aria-hidden="true"><use href="#pin"/></svg>67-100%</li>
      <li class="over"><svg width="92" height="129" aria-hidden="true"><use href="#pin"/></svg>101- 150%</li>
      <li class="closed"><svg width="92" height="129" aria-hidden="true"><use href="#pin"/></svg>Fermé</li>
      <li class="nodata"><svg width="92" height="129" aria-hidden="true"><use href="#pin"/></svg>No data</li>
    </ul>

    <h3>Cliquez sur l’icône pour connaitre le taux précis</h3>
    <div class="example">
      <div class="tap">
        <svg width="164" height="196" viewBox="0 0 164 196" aria-hidden="true">
          <path class="tap-pin" d="M50 4C24 4 4 24 4 50C4 65 14 84 22 97C31 112 40 121 50 133C60 121 69 112 78 97C86 84 96 65 96 50C96 24 76 4 50 4Z"/>
          <use class="tap-star" href="#star" x="50" y="51"/>
          <path class="tap-line" d="M48 141A33 33 0 1 1 90.500 92.700"/>
          <path class="tap-line" d="M66 103L56.500 112Q54 115 56 118L93 154.500Q97 160 90 161L77 162Q71 162.500 71 168L72 175Q72.500 178.500 76 179.500L109 190Q132 196 147 180Q159 168 159.500 153Q160 138 150 127L129 106Q126.500 104 124 106L97 126Q94.500 128 92 126L70.500 103Q68.500 101 66 103Z"/>
        </svg>
      </div>
      <article class="card">
        <p class="tag">Exemple</p>
        <p>Établissement</p>
        <p class="name">Jeanne de Flandre - Lille</p>
        <p class="address">Av. Eugène Avinée, 59000 Lille</p>
        <p>Taux d’occupation réel</p>
        <p class="rate">12%</p>
      </article>
    </div>

    <div class="actions">
      <button class="support" type="button">Contacter le support</button>
      <button class="confirm" type="button">J'ai compris</button>
    </div>
  </section>
</main>
</body>
</html>
```

FILE: styles.css
```css
* {
  box-sizing: border-box;
}

body {
  margin: 0;
  background: #fff;
  color: #000;
  font-family: Roboto, "Liberation Sans", sans-serif;
}

h1, h2, h3, p, ul {
  margin: 0;
  padding: 0;
}

svg {
  display: block;
}

.defs {
  position: absolute;
  width: 0;
  height: 0;
}

.app {
  min-height: 100vh;
  display: flex;
  flex-direction: column;
  overflow: hidden;
  border-radius: 120px;
}

/* Map */
.map-area {
  position: relative;
}

.map {
  width: 100%;
  height: auto;
}

.map path {
  vector-effect: non-scaling-stroke;
}

.land { fill: #cbf8e1; }
.urban { fill: #f5f7f6; }
.peach { fill: #f6ece1; }
.lake { fill: #d0ddf8; }
.water { fill: #80daf0; }

.street,
.minor,
.secondary,
.river,
#motorways,
#trunks {
  fill: none;
  stroke-linejoin: round;
}

.street { stroke: #dadfe7; stroke-width: 2; }
.minor { stroke: #b4cdd0; stroke-width: 2; }
.secondary { stroke: #97adca; stroke-width: 2; }
.river { stroke: #7fdff0; stroke-width: 2; }
.river.wide { stroke-width: 4; }
.trunk-case { stroke: #8497c3; stroke-width: 5; }
.trunk-line { stroke: #9fb4da; stroke-width: 3; }
.motorway-case { stroke: #8497c3; stroke-width: 7; }
.motorway-line { stroke: #9fb4da; stroke-width: 5; }

.places {
  font-family: Inter, "Liberation Sans", sans-serif;
  font-size: 30px;
  fill: #303134;
  stroke: #fff;
  stroke-width: 4px;
  stroke-linejoin: round;
  paint-order: stroke;
}

.places.city {
  font-size: 33px;
  font-weight: 500;
}

.shield text {
  font-family: Inter, "Liberation Sans", sans-serif;
  font-size: 24px;
  font-weight: 500;
  text-anchor: middle;
  fill: #fff;
}

.shield .band { fill: #fff; }
.blue .edge { fill: #8fa6d6; }
.blue .face { fill: #0f76cf; }
.green .edge { fill: #8db46c; }
.green .face { fill: #58a12b; }
.red .edge { fill: #ed9698; }
.red .face { fill: #e9565b; }
.yellow .edge { fill: #c4a648; }
.yellow .face { fill: #fdd800; }
.shield.yellow text { fill: #3d3a2c; }

.position { fill: #1e88ff; }
.position .range { fill: #6b9df7; fill-opacity: .25; }
.position .dot { stroke: #fff; stroke-width: 3; }

.marker {
  fill: #bcbcbc;
  stroke: #4d4848;
  stroke-width: 3;
}

.marker use {
  fill: #4d4848;
  stroke: #f0f0f0;
  stroke-width: 3;
  paint-order: stroke;
}

.round-btn {
  display: grid;
  place-items: center;
  width: 132px;
  height: 132px;
  padding: 0;
  border: 0;
  border-radius: 50%;
  background: #fff;
  box-shadow: 0 4px 24px rgba(0, 0, 0, .2);
}

.round-btn .stroke {
  fill: none;
  stroke: #0098ff;
  stroke-width: 5;
}

.round-btn .solid { fill: #0098ff; }

.locate {
  position: absolute;
  left: 41px;
  bottom: 98px;
}

.zoom {
  position: absolute;
  right: 44px;
  bottom: 98px;
  display: grid;
  gap: 22px;
}

/* Bottom sheet */
.sheet {
  position: relative;
  flex: 1;
  margin-top: -60px;
  padding: 60px 72px 98px;
  border-radius: 60px 60px 0 0;
  background: #fafafa;
}

.logo-front use {
  stroke: #fafafa;
  stroke-width: 2;
  paint-order: stroke;
}

h1 {
  margin-top: 30px;
  font-size: 45px;
  line-height: 56px;
}

.intro {
  margin-top: 18px;
  font-size: 30px;
  line-height: 36px;
}

h2 {
  margin-top: 80px;
  font-size: 60px;
  line-height: 72px;
  text-align: center;
}

.legend {
  display: grid;
  grid-template-columns: repeat(6, 1fr);
  margin: 48px -28px 0;
  list-style: none;
  font-size: 30px;
  font-weight: 700;
  line-height: 36px;
}

.legend li {
  display: flex;
  flex-direction: column;
  align-items: center;
  gap: 30px;
  white-space: nowrap;
}

.pin-body {
  fill: var(--body);
  stroke: var(--ink);
  stroke-width: 3;
}

.pin-star {
  fill: var(--ink);
  stroke: var(--halo);
  stroke-width: 5;
  stroke-linejoin: round;
  paint-order: stroke;
}

.low { --body: #7aff80; --ink: #00ae0e; --halo: #aaffaf; }
.medium { --body: #e4a835; --ink: #d28500; --halo: #ffe7a5; }
.high { --body: #fd5450; --ink: #d8262a; --halo: #ffcfcf; }
.over { --body: #8344c6; --ink: #4b2c7c; --halo: #bd8ce2; }
.closed { --body: #5b5b5b; --ink: #2d2d2d; --halo: #d5d5d5; }
.nodata { --body: #bebebe; --ink: #4d4848; --halo: #dedede; }

h3 {
  margin-top: 82px;
  font-size: 39px;
  font-weight: 400;
  line-height: 48px;
}

.example {
  display: grid;
  grid-template-columns: 320px 1fr;
  margin: 26px 9px 0 0;
}

.tap {
  display: grid;
  place-items: center;
  padding: 16px 0 0 40px;
}

.tap-pin {
  fill: #7aff80;
  stroke: #00b012;
  stroke-width: 6;
}

.tap-star {
  fill: #00ae0e;
  stroke: #aaffaf;
  stroke-width: 4;
  paint-order: stroke;
}

.tap-line {
  fill: none;
  stroke: #000;
  stroke-width: 6;
  stroke-linecap: round;
  stroke-linejoin: round;
}

.card {
  position: relative;
  padding: 28px 36px 50px 58px;
  border-radius: 32px;
  background: #f1f1f1;
  font-size: 30px;
  line-height: 36px;
}

.card::before {
  content: "";
  position: absolute;
  left: -18px;
  top: 50%;
  width: 40px;
  height: 40px;
  margin-top: -20px;
  border-radius: 4px;
  background: #f1f1f1;
  transform: rotate(45deg);
}

.card .tag {
  color: #c6c6c6;
  font-size: 33px;
  line-height: 40px;
  text-align: right;
}

.card .name {
  font-size: 42px;
  font-weight: 700;
  line-height: 52px;
}

.card .address {
  margin: 10px 0 30px;
  color: #8c8c8c;
}

.card .rate {
  margin-top: 14px;
  color: #00b012;
  font-size: 60px;
  font-weight: 700;
  line-height: 72px;
}

.actions {
  display: flex;
  gap: 12px;
  margin-top: 62px;
}

.actions button {
  height: 102px;
  padding: 0;
  border: 0;
  border-radius: 51px;
  font-family: Inter, "Liberation Sans", sans-serif;
  font-size: 43px;
}

.support {
  flex: 541 1 0;
  background: #e9e9e9;
  color: #007aff;
}

.confirm {
  flex: 509 1 0;
  background: #007aff;
  color: #fff;
}
```
